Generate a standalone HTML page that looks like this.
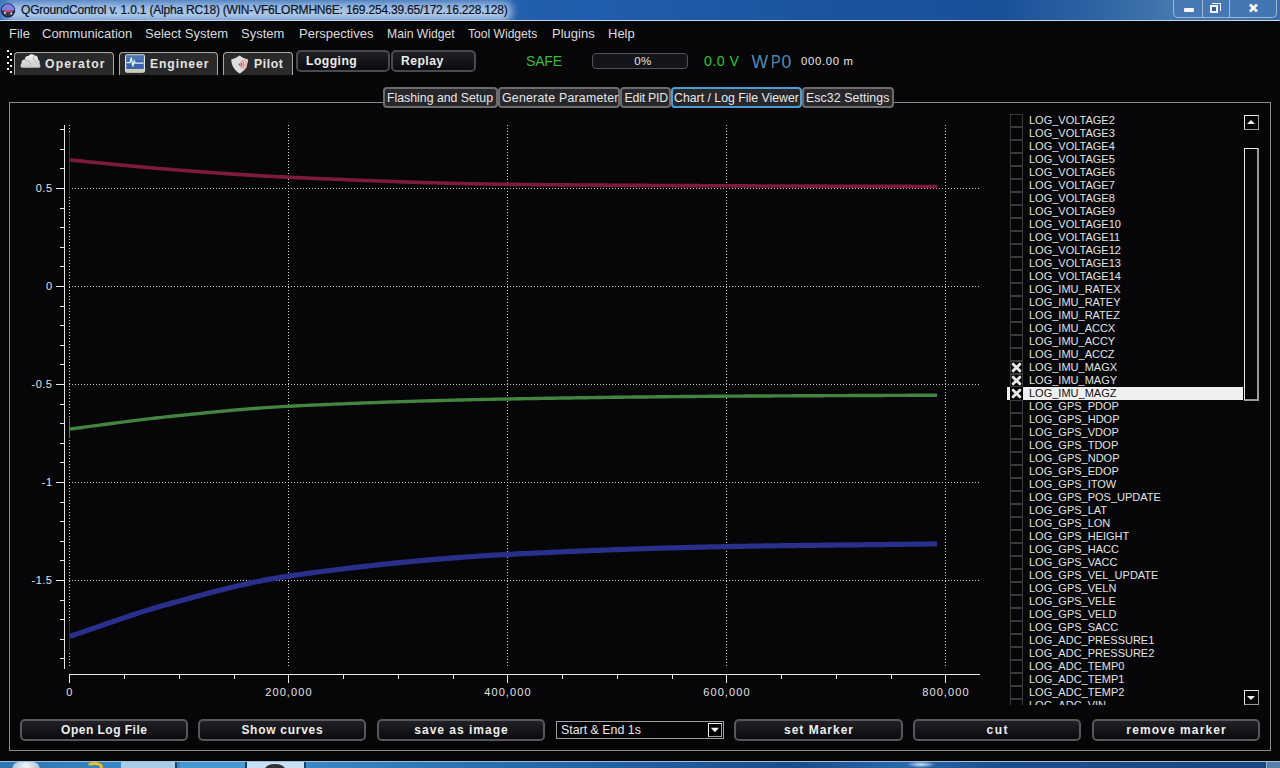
<!DOCTYPE html>
<html><head><meta charset="utf-8">
<style>
*{margin:0;padding:0;box-sizing:border-box}
html,body{width:1280px;height:768px;overflow:hidden;background:#060609;font-family:"Liberation Sans",sans-serif;color:#e6e6e6}
.a{position:absolute;white-space:pre}
#title{position:absolute;left:0;top:0;width:1280px;height:21px;overflow:hidden;
 background:linear-gradient(90deg,#3a72b8 0px,#2563ae 300px,#1f5eac 600px,#1b559f 800px,#1a5098 1000px,#2f64a4 1100px,#4577b0 1170px,#3c6eaa 1280px)}
#title .glow{position:absolute;left:4px;top:1px;width:508px;height:20px;background:linear-gradient(180deg,#8aaedc 0,#a4c0e4 40%,#b6ceea 80%,#c8dcf0 100%);filter:blur(4px);border-radius:8px}
#title .bl{position:absolute;left:0;top:20px;width:1280px;height:1px;background:#c4d6ec}
#menu span{position:absolute;white-space:pre;top:26px;font-size:13px;line-height:16px;color:#dcdcdc}
.tab{position:absolute;top:52px;height:23px;border:1px solid #a8a8a8;border-bottom:none;border-radius:4px 4px 0 0;background:#292929}
.tab span{position:absolute;white-space:pre;top:3px;font-weight:bold;font-size:12.2px;line-height:16px;color:#e4e4e4}
.tbtn{position:absolute;top:50px;height:22px;border:2px solid #4a4a4e;border-radius:5px;background:linear-gradient(180deg,#1e1e24,#0b0b0f)}
.tbtn span{position:absolute;white-space:pre;top:1px;font-weight:bold;font-size:12.2px;line-height:16px;color:#ececec}
.ptab{position:absolute;top:87px;height:21px;border:2px solid #6c6c6e;border-radius:4px;background:#27272b}
.ptab span{position:absolute;white-space:pre;top:1px;font-size:12.3px;line-height:16px;color:#e8e8e8}
.bbtn{position:absolute;top:719px;height:22px;border:2px solid #58585c;border-radius:5px;background:linear-gradient(180deg,#202026,#0a0a0e)}
.bbtn span{position:absolute;white-space:pre;left:0;right:0;top:1px;text-align:center;font-weight:bold;font-size:12px;line-height:16px;color:#ededed}
#list div{position:absolute;left:1007px;height:13px;width:236px}
#list i{position:absolute;left:3px;top:0;width:13px;height:13px;border:1px solid #3a3a3a}
#list b{position:absolute;left:22px;top:-1px;font-weight:normal;font-size:11px;line-height:14px;color:#e2e2e2;white-space:pre}
</style></head><body>
<div id="title"><div class="glow"></div><div class="bl"></div>
 <svg class="a" style="left:0;top:2px" width="18" height="17" viewBox="0 0 18 17">
  <circle cx="8" cy="8.5" r="6.6" fill="#3a3a48" stroke="#1c1c50" stroke-width="1.2"/>
  <path d="M1.6 8.5 A6.4 6.4 0 0 1 14.4 8.5 Z" fill="#7a82ea"/>
  <path d="M3.5 10 L6 7.8 L10 7.8 L12.5 10 Z" fill="#d04a6a"/>
  <circle cx="5" cy="11" r="1" fill="#e8e8e8"/><circle cx="11.3" cy="11.5" r="1" fill="#e8e8e8"/>
 </svg>
 <div class="a" style="left:21px;top:3px;font-size:12px;line-height:14px;color:#0a1424;letter-spacing:-0.2px;-webkit-text-stroke:0.2px #0a1424">QGroundControl v. 1.0.1 (Alpha RC18) (WIN-VF6LORMHN6E: 169.254.39.65/172.16.228.128)</div>
 <div class="a" style="left:1173px;top:0;width:104px;height:18px;border:1px solid #9ab8dc;border-top:none;border-radius:0 0 5px 5px;background:rgba(80,130,190,0.35)"></div>
 <div class="a" style="left:1202px;top:0;width:1px;height:18px;background:#9ab8dc"></div>
 <div class="a" style="left:1229px;top:0;width:1px;height:18px;background:#9ab8dc"></div>
 <div class="a" style="left:1184px;top:8px;width:10px;height:4px;background:#f4f4f4;border-radius:1px"></div>
 <div class="a" style="left:1212px;top:3px;width:9px;height:8px;border:1.5px solid #f0f0f0;border-left:none;border-bottom:none"></div>
 <div class="a" style="left:1210px;top:5px;width:8px;height:8px;border:2.5px solid #f4f4f4;background:#3c5c8a"></div>
 <svg class="a" style="left:1248px;top:3px" width="11" height="10" viewBox="0 0 11 10"><path d="M2 1.5 L9 8.5 M9 1.5 L2 8.5" stroke="#f6f6f6" stroke-width="2.8" stroke-linecap="butt"/></svg>
</div>

<div id="menu">
 <span style="left:9px">File</span>
 <span style="left:42px">Communication</span>
 <span style="left:145px">Select System</span>
 <span style="left:241px">System</span>
 <span style="left:299px">Perspectives</span>
 <span style="left:387px;font-size:12.2px">Main Widget</span>
 <span style="left:468px;font-size:12.1px">Tool Widgets</span>
 <span style="left:552px">Plugins</span>
 <span style="left:608px">Help</span>
</div>

<!-- grip -->
<svg class="a" style="left:0;top:0" width="14" height="76" viewBox="0 0 14 76"><g fill="#f2f2f2"><rect x="7" y="50" width="2" height="2"/><rect x="10" y="53" width="2" height="2"/><rect x="7" y="56" width="2" height="2"/><rect x="10" y="59" width="2" height="2"/><rect x="7" y="62" width="2" height="2"/><rect x="10" y="65" width="2" height="2"/><rect x="7" y="68" width="2" height="2"/><rect x="10" y="71" width="2" height="2"/></g></svg>

<div class="tab" style="left:14px;width:100px"><span style="left:30px;letter-spacing:1.15px">Operator</span>
 <svg style="position:absolute;left:5px;top:0px" width="22" height="16" viewBox="0 0 22 16">
  <defs><linearGradient id="cg" x1="0" y1="0" x2="0" y2="1"><stop offset="0" stop-color="#f2f2f2"/><stop offset="1" stop-color="#c8c8c8"/></linearGradient></defs>
  <path d="M2 14.8 C0.3 14.6 0.2 11.5 1.5 10.5 C1 8 3 6.3 5 6.5 C4.8 4 6.5 2.5 8.5 3 C9.5 0.8 13 0.5 14.5 2.5 C16.5 2 18.5 4 18 6.5 C19.8 7.5 20 9.5 19.5 11 C20.8 12 20.8 14.6 19.2 14.8 Z" fill="url(#cg)"/>
  <path d="M5 6.5 C6 7.8 7.5 8.2 9 7.8 M14.5 2.5 C13.5 4 13.2 5.5 13.8 7 M9 7.8 C10 9 10.2 10.5 9.8 12.5 M13.8 7 C15.5 7.3 16.5 8.5 17 10" stroke="#a8a8a8" stroke-width="0.7" fill="none"/>
 </svg></div>
<div class="tab" style="left:119px;width:99px"><span style="left:30px;letter-spacing:0.9px">Engineer</span>
 <svg style="position:absolute;left:4px;top:0px" width="22" height="21" viewBox="0 0 22 21">
  <rect x="1" y="1.2" width="20" height="18.6" rx="2" fill="#dfe4e6"/>
  <rect x="2.2" y="2.4" width="17.6" height="13.6" fill="#3d62ac"/>
  <rect x="2.2" y="2.4" width="17.6" height="5" fill="#5878b4" opacity="0.7"/>
  <rect x="2.2" y="16.4" width="17.6" height="2.4" fill="#c4ccb0"/>
  <path d="M2.6 9.6 L6 9.6 L7.3 4.5 L8.8 13.5 L10.2 8 L11.2 10.2 L19.4 10.2" stroke="#dcf6fa" stroke-width="1.3" fill="none"/>
 </svg></div>
<div class="tab" style="left:223px;width:70px"><span style="left:30px;letter-spacing:0.6px">Pilot</span>
 <svg style="position:absolute;left:6px;top:1px" width="20" height="20" viewBox="0 0 20 20">
  <path d="M9.6 1.6 C12 3.5 15 5 18 5.5 C18 11 15.5 16 9.8 19.6 C4 16 1.5 11 1.2 5.5 C4 5 7 3.5 9.6 1.6 Z" fill="#dedede"/>
  <path d="M11.5 6.5 A4.5 4.5 0 0 1 11.5 14.5" stroke="#e87878" stroke-width="1.4" fill="none"/>
  <path d="M13.5 5 A6.5 6.5 0 0 1 13.5 16" stroke="#f0a0a0" stroke-width="1.2" fill="none"/>
  <path d="M10.5 8.5 A2.2 2.2 0 0 1 10.5 12.5" stroke="#d84848" stroke-width="1.3" fill="none"/>
  <circle cx="9.6" cy="10.4" r="1" fill="#8a5858"/>
 </svg></div>

<div class="tbtn" style="left:296px;width:94px"><span style="left:8px;letter-spacing:0.45px">Logging</span></div>
<div class="tbtn" style="left:391px;width:85px"><span style="left:8px;letter-spacing:0.45px">Replay</span></div>

<div class="a" style="left:526px;top:53px;font-size:14px;line-height:16px;color:#3cba3c;letter-spacing:-0.2px">SAFE</div>
<div class="a" style="left:592px;top:53px;width:96px;height:16px;border:1px solid #505056;border-radius:4px;background:#14151b"></div>
<div class="a" style="left:595px;top:53px;width:96px;line-height:16px;text-align:center;font-size:11.5px;color:#e6e6e6;letter-spacing:0.4px">0%</div>
<div class="a" style="left:704px;top:53px;font-size:14px;line-height:16px;color:#22cc22;letter-spacing:0.55px">0.0 V</div>
<div class="a" style="left:751.5px;top:53px;font-size:17.6px;line-height:18px;color:#4f8cb4">W</div>
<div class="a" style="left:770.5px;top:53px;font-size:17.6px;line-height:18px;color:#4f8cb4;transform:scaleX(0.82);transform-origin:0 0">P</div>
<div class="a" style="left:781.5px;top:53px;font-size:17.6px;line-height:18px;color:#4f8cb4">0</div>
<div class="a" style="left:801px;top:54px;font-size:11.3px;line-height:14px;color:#e6e6e6;letter-spacing:0.7px">000.00 m</div>

<!-- pane -->
<div class="a" style="left:9px;top:102px;width:1262px;height:649px;border:1px solid #8a8a8a"></div>

<div class="ptab" style="left:383px;width:115px"><span style="left:2px">Flashing and Setup</span></div>
<div class="ptab" style="left:498px;width:122px"><span style="left:2px;letter-spacing:0.25px">Generate Parameter</span></div>
<div class="ptab" style="left:620px;width:51px"><span style="left:2.5px;letter-spacing:-0.2px">Edit PID</span></div>
<div class="ptab" style="left:671px;width:131px;border-color:#4a9ed4"><span style="left:1px">Chart / Log File Viewer</span></div>
<div class="ptab" style="left:802px;width:92px"><span style="left:2px;letter-spacing:0.1px">Esc32 Settings</span></div>

<!-- chart -->
<svg class="a" style="left:0;top:0" width="1000" height="710" viewBox="0 0 1000 710" shape-rendering="crispEdges">
<line x1="69.5" y1="125" x2="69.5" y2="668" stroke="#cfcfcf" stroke-width="1" stroke-dasharray="1 2"/>
<line x1="288.5" y1="125" x2="288.5" y2="668" stroke="#cfcfcf" stroke-width="1" stroke-dasharray="1 2"/>
<line x1="507.5" y1="125" x2="507.5" y2="668" stroke="#cfcfcf" stroke-width="1" stroke-dasharray="1 2"/>
<line x1="726.5" y1="125" x2="726.5" y2="668" stroke="#cfcfcf" stroke-width="1" stroke-dasharray="1 2"/>
<line x1="945.5" y1="125" x2="945.5" y2="668" stroke="#cfcfcf" stroke-width="1" stroke-dasharray="1 2"/>
<line x1="69" y1="188.5" x2="980" y2="188.5" stroke="#cfcfcf" stroke-width="1" stroke-dasharray="1 2"/>
<line x1="69" y1="286.5" x2="980" y2="286.5" stroke="#cfcfcf" stroke-width="1" stroke-dasharray="1 2"/>
<line x1="69" y1="384.5" x2="980" y2="384.5" stroke="#cfcfcf" stroke-width="1" stroke-dasharray="1 2"/>
<line x1="69" y1="482.5" x2="980" y2="482.5" stroke="#cfcfcf" stroke-width="1" stroke-dasharray="1 2"/>
<line x1="69" y1="580.5" x2="980" y2="580.5" stroke="#cfcfcf" stroke-width="1" stroke-dasharray="1 2"/>
<line x1="64.5" y1="125" x2="64.5" y2="669" stroke="#e8e8e8" stroke-width="1"/>
<line x1="60" y1="658.5" x2="64" y2="658.5" stroke="#e8e8e8" stroke-width="1"/>
<line x1="60" y1="639.5" x2="64" y2="639.5" stroke="#e8e8e8" stroke-width="1"/>
<line x1="60" y1="619.5" x2="64" y2="619.5" stroke="#e8e8e8" stroke-width="1"/>
<line x1="60" y1="600.5" x2="64" y2="600.5" stroke="#e8e8e8" stroke-width="1"/>
<line x1="56" y1="580.5" x2="64" y2="580.5" stroke="#e8e8e8" stroke-width="1"/>
<line x1="60" y1="560.5" x2="64" y2="560.5" stroke="#e8e8e8" stroke-width="1"/>
<line x1="60" y1="541.5" x2="64" y2="541.5" stroke="#e8e8e8" stroke-width="1"/>
<line x1="60" y1="521.5" x2="64" y2="521.5" stroke="#e8e8e8" stroke-width="1"/>
<line x1="60" y1="502.5" x2="64" y2="502.5" stroke="#e8e8e8" stroke-width="1"/>
<line x1="56" y1="482.5" x2="64" y2="482.5" stroke="#e8e8e8" stroke-width="1"/>
<line x1="60" y1="462.5" x2="64" y2="462.5" stroke="#e8e8e8" stroke-width="1"/>
<line x1="60" y1="443.5" x2="64" y2="443.5" stroke="#e8e8e8" stroke-width="1"/>
<line x1="60" y1="423.5" x2="64" y2="423.5" stroke="#e8e8e8" stroke-width="1"/>
<line x1="60" y1="404.5" x2="64" y2="404.5" stroke="#e8e8e8" stroke-width="1"/>
<line x1="56" y1="384.5" x2="64" y2="384.5" stroke="#e8e8e8" stroke-width="1"/>
<line x1="60" y1="364.5" x2="64" y2="364.5" stroke="#e8e8e8" stroke-width="1"/>
<line x1="60" y1="345.5" x2="64" y2="345.5" stroke="#e8e8e8" stroke-width="1"/>
<line x1="60" y1="325.5" x2="64" y2="325.5" stroke="#e8e8e8" stroke-width="1"/>
<line x1="60" y1="306.5" x2="64" y2="306.5" stroke="#e8e8e8" stroke-width="1"/>
<line x1="56" y1="286.5" x2="64" y2="286.5" stroke="#e8e8e8" stroke-width="1"/>
<line x1="60" y1="266.5" x2="64" y2="266.5" stroke="#e8e8e8" stroke-width="1"/>
<line x1="60" y1="247.5" x2="64" y2="247.5" stroke="#e8e8e8" stroke-width="1"/>
<line x1="60" y1="227.5" x2="64" y2="227.5" stroke="#e8e8e8" stroke-width="1"/>
<line x1="60" y1="208.5" x2="64" y2="208.5" stroke="#e8e8e8" stroke-width="1"/>
<line x1="56" y1="188.5" x2="64" y2="188.5" stroke="#e8e8e8" stroke-width="1"/>
<line x1="60" y1="168.5" x2="64" y2="168.5" stroke="#e8e8e8" stroke-width="1"/>
<line x1="60" y1="149.5" x2="64" y2="149.5" stroke="#e8e8e8" stroke-width="1"/>
<line x1="60" y1="129.5" x2="64" y2="129.5" stroke="#e8e8e8" stroke-width="1"/>
<line x1="69" y1="674.5" x2="980" y2="674.5" stroke="#e8e8e8" stroke-width="1"/>
<line x1="69.5" y1="674" x2="69.5" y2="683" stroke="#e8e8e8" stroke-width="1"/>
<line x1="124.5" y1="674" x2="124.5" y2="679" stroke="#e8e8e8" stroke-width="1"/>
<line x1="179.5" y1="674" x2="179.5" y2="679" stroke="#e8e8e8" stroke-width="1"/>
<line x1="234.5" y1="674" x2="234.5" y2="679" stroke="#e8e8e8" stroke-width="1"/>
<line x1="288.5" y1="674" x2="288.5" y2="683" stroke="#e8e8e8" stroke-width="1"/>
<line x1="343.5" y1="674" x2="343.5" y2="679" stroke="#e8e8e8" stroke-width="1"/>
<line x1="398.5" y1="674" x2="398.5" y2="679" stroke="#e8e8e8" stroke-width="1"/>
<line x1="453.5" y1="674" x2="453.5" y2="679" stroke="#e8e8e8" stroke-width="1"/>
<line x1="507.5" y1="674" x2="507.5" y2="683" stroke="#e8e8e8" stroke-width="1"/>
<line x1="562.5" y1="674" x2="562.5" y2="679" stroke="#e8e8e8" stroke-width="1"/>
<line x1="617.5" y1="674" x2="617.5" y2="679" stroke="#e8e8e8" stroke-width="1"/>
<line x1="672.5" y1="674" x2="672.5" y2="679" stroke="#e8e8e8" stroke-width="1"/>
<line x1="726.5" y1="674" x2="726.5" y2="683" stroke="#e8e8e8" stroke-width="1"/>
<line x1="781.5" y1="674" x2="781.5" y2="679" stroke="#e8e8e8" stroke-width="1"/>
<line x1="836.5" y1="674" x2="836.5" y2="679" stroke="#e8e8e8" stroke-width="1"/>
<line x1="891.5" y1="674" x2="891.5" y2="679" stroke="#e8e8e8" stroke-width="1"/>
<line x1="945.5" y1="674" x2="945.5" y2="683" stroke="#e8e8e8" stroke-width="1"/>
</svg>
<svg class="a" style="left:0;top:0" width="1000" height="710" viewBox="0 0 1000 710">
<path d="M69.5 132 L69.5 195.6" stroke="#6a1834" stroke-width="1" fill="none"/>
<path d="M70.0 160.00 L74.0 160.38 L78.0 160.77 L82.0 161.16 L86.0 161.55 L90.0 161.95 L94.0 162.35 L98.0 162.75 L102.0 163.15 L106.0 163.55 L110.0 163.94 L114.0 164.34 L118.0 164.74 L122.0 165.13 L126.0 165.52 L130.0 165.91 L134.0 166.29 L138.0 166.66 L142.0 167.03 L146.0 167.39 L150.0 167.75 L154.0 168.09 L158.0 168.43 L162.0 168.76 L166.0 169.08 L170.0 169.39 L174.0 169.71 L178.0 170.02 L182.0 170.33 L186.0 170.64 L190.0 170.95 L194.0 171.25 L198.0 171.56 L202.0 171.85 L206.0 172.15 L210.0 172.45 L214.0 172.74 L218.0 173.02 L222.0 173.31 L226.0 173.58 L230.0 173.86 L234.0 174.13 L238.0 174.39 L242.0 174.65 L246.0 174.91 L250.0 175.16 L254.0 175.40 L258.0 175.64 L262.0 175.87 L266.0 176.09 L270.0 176.31 L274.0 176.52 L278.0 176.72 L282.0 176.92 L286.0 177.11 L290.0 177.29 L294.0 177.47 L298.0 177.65 L302.0 177.83 L306.0 178.00 L310.0 178.18 L314.0 178.36 L318.0 178.53 L322.0 178.70 L326.0 178.88 L330.0 179.05 L334.0 179.22 L338.0 179.38 L342.0 179.55 L346.0 179.72 L350.0 179.88 L354.0 180.04 L358.0 180.20 L362.0 180.36 L366.0 180.52 L370.0 180.67 L374.0 180.82 L378.0 180.97 L382.0 181.12 L386.0 181.27 L390.0 181.41 L394.0 181.55 L398.0 181.69 L402.0 181.83 L406.0 181.96 L410.0 182.09 L414.0 182.22 L418.0 182.35 L422.0 182.47 L426.0 182.59 L430.0 182.71 L434.0 182.82 L438.0 182.93 L442.0 183.04 L446.0 183.15 L450.0 183.25 L454.0 183.35 L458.0 183.44 L462.0 183.53 L466.0 183.62 L470.0 183.71 L474.0 183.79 L478.0 183.86 L482.0 183.94 L486.0 184.00 L490.0 184.07 L494.0 184.13 L498.0 184.19 L502.0 184.24 L506.0 184.29 L510.0 184.33 L514.0 184.38 L518.0 184.42 L522.0 184.46 L526.0 184.50 L530.0 184.54 L534.0 184.58 L538.0 184.62 L542.0 184.66 L546.0 184.70 L550.0 184.73 L554.0 184.77 L558.0 184.80 L562.0 184.84 L566.0 184.87 L570.0 184.90 L574.0 184.94 L578.0 184.97 L582.0 185.00 L586.0 185.03 L590.0 185.06 L594.0 185.09 L598.0 185.11 L602.0 185.14 L606.0 185.17 L610.0 185.20 L614.0 185.22 L618.0 185.25 L622.0 185.27 L626.0 185.30 L630.0 185.32 L634.0 185.34 L638.0 185.37 L642.0 185.39 L646.0 185.41 L650.0 185.43 L654.0 185.46 L658.0 185.48 L662.0 185.50 L666.0 185.52 L670.0 185.54 L674.0 185.56 L678.0 185.58 L682.0 185.60 L686.0 185.62 L690.0 185.64 L694.0 185.65 L698.0 185.67 L702.0 185.69 L706.0 185.71 L710.0 185.73 L714.0 185.75 L718.0 185.76 L722.0 185.78 L726.0 185.80 L730.0 185.82 L734.0 185.84 L738.0 185.85 L742.0 185.87 L746.0 185.89 L750.0 185.90 L754.0 185.92 L758.0 185.93 L762.0 185.95 L766.0 185.96 L770.0 185.98 L774.0 185.99 L778.0 186.01 L782.0 186.02 L786.0 186.03 L790.0 186.05 L794.0 186.06 L798.0 186.07 L802.0 186.09 L806.0 186.10 L810.0 186.11 L814.0 186.13 L818.0 186.14 L822.0 186.15 L826.0 186.16 L830.0 186.18 L834.0 186.19 L838.0 186.20 L842.0 186.21 L846.0 186.22 L850.0 186.24 L854.0 186.25 L858.0 186.26 L862.0 186.27 L866.0 186.28 L870.0 186.29 L874.0 186.31 L878.0 186.32 L882.0 186.33 L886.0 186.34 L890.0 186.35 L894.0 186.37 L898.0 186.38 L902.0 186.39 L906.0 186.40 L910.0 186.41 L914.0 186.43 L918.0 186.44 L922.0 186.45 L926.0 186.46 L930.0 186.48 L934.0 186.49 L937.0 186.50" stroke="#7e1a3c" stroke-width="3.6" fill="none" stroke-linejoin="round"/>
<path d="M69.5 418 L69.5 438" stroke="#43843f" stroke-width="1" fill="none"/>
<path d="M70.0 429.00 L74.0 428.49 L78.0 427.98 L82.0 427.45 L86.0 426.93 L90.0 426.40 L94.0 425.87 L98.0 425.33 L102.0 424.80 L106.0 424.26 L110.0 423.73 L114.0 423.20 L118.0 422.67 L122.0 422.14 L126.0 421.62 L130.0 421.11 L134.0 420.60 L138.0 420.10 L142.0 419.61 L146.0 419.13 L150.0 418.66 L154.0 418.20 L158.0 417.75 L162.0 417.32 L166.0 416.90 L170.0 416.48 L174.0 416.06 L178.0 415.65 L182.0 415.23 L186.0 414.82 L190.0 414.41 L194.0 414.00 L198.0 413.59 L202.0 413.19 L206.0 412.79 L210.0 412.40 L214.0 412.01 L218.0 411.62 L222.0 411.24 L226.0 410.87 L230.0 410.51 L234.0 410.15 L238.0 409.80 L242.0 409.46 L246.0 409.13 L250.0 408.80 L254.0 408.49 L258.0 408.19 L262.0 407.90 L266.0 407.62 L270.0 407.35 L274.0 407.09 L278.0 406.85 L282.0 406.62 L286.0 406.40 L290.0 406.20 L294.0 406.00 L298.0 405.81 L302.0 405.61 L306.0 405.42 L310.0 405.24 L314.0 405.05 L318.0 404.87 L322.0 404.69 L326.0 404.51 L330.0 404.34 L334.0 404.17 L338.0 404.00 L342.0 403.83 L346.0 403.67 L350.0 403.51 L354.0 403.35 L358.0 403.19 L362.0 403.04 L366.0 402.89 L370.0 402.74 L374.0 402.59 L378.0 402.45 L382.0 402.31 L386.0 402.17 L390.0 402.03 L394.0 401.89 L398.0 401.76 L402.0 401.63 L406.0 401.51 L410.0 401.38 L414.0 401.26 L418.0 401.14 L422.0 401.02 L426.0 400.90 L430.0 400.79 L434.0 400.68 L438.0 400.57 L442.0 400.46 L446.0 400.35 L450.0 400.25 L454.0 400.15 L458.0 400.05 L462.0 399.95 L466.0 399.86 L470.0 399.77 L474.0 399.67 L478.0 399.59 L482.0 399.50 L486.0 399.41 L490.0 399.33 L494.0 399.25 L498.0 399.17 L502.0 399.09 L506.0 399.02 L510.0 398.94 L514.0 398.87 L518.0 398.80 L522.0 398.73 L526.0 398.66 L530.0 398.59 L534.0 398.52 L538.0 398.45 L542.0 398.38 L546.0 398.32 L550.0 398.25 L554.0 398.19 L558.0 398.12 L562.0 398.06 L566.0 398.00 L570.0 397.94 L574.0 397.88 L578.0 397.82 L582.0 397.76 L586.0 397.70 L590.0 397.64 L594.0 397.58 L598.0 397.53 L602.0 397.47 L606.0 397.42 L610.0 397.37 L614.0 397.32 L618.0 397.26 L622.0 397.21 L626.0 397.16 L630.0 397.11 L634.0 397.07 L638.0 397.02 L642.0 396.97 L646.0 396.93 L650.0 396.88 L654.0 396.84 L658.0 396.80 L662.0 396.75 L666.0 396.71 L670.0 396.67 L674.0 396.63 L678.0 396.59 L682.0 396.56 L686.0 396.52 L690.0 396.48 L694.0 396.45 L698.0 396.41 L702.0 396.38 L706.0 396.35 L710.0 396.32 L714.0 396.29 L718.0 396.26 L722.0 396.23 L726.0 396.20 L730.0 396.17 L734.0 396.15 L738.0 396.12 L742.0 396.09 L746.0 396.07 L750.0 396.05 L754.0 396.02 L758.0 396.00 L762.0 395.98 L766.0 395.95 L770.0 395.93 L774.0 395.91 L778.0 395.89 L782.0 395.87 L786.0 395.85 L790.0 395.83 L794.0 395.81 L798.0 395.79 L802.0 395.77 L806.0 395.75 L810.0 395.74 L814.0 395.72 L818.0 395.70 L822.0 395.68 L826.0 395.67 L830.0 395.65 L834.0 395.63 L838.0 395.62 L842.0 395.60 L846.0 395.58 L850.0 395.57 L854.0 395.55 L858.0 395.53 L862.0 395.52 L866.0 395.50 L870.0 395.49 L874.0 395.47 L878.0 395.45 L882.0 395.44 L886.0 395.42 L890.0 395.41 L894.0 395.39 L898.0 395.37 L902.0 395.36 L906.0 395.34 L910.0 395.32 L914.0 395.30 L918.0 395.29 L922.0 395.27 L926.0 395.25 L930.0 395.23 L934.0 395.21 L937.0 395.20" stroke="#43843f" stroke-width="3.4" fill="none" stroke-linejoin="round"/>
<path d="M69.5 622 L69.5 651" stroke="#262a70" stroke-width="1" fill="none"/>
<path d="M70.0 636.30 L74.0 634.97 L78.0 633.63 L82.0 632.28 L86.0 630.91 L90.0 629.53 L94.0 628.15 L98.0 626.76 L102.0 625.37 L106.0 623.98 L110.0 622.60 L114.0 621.22 L118.0 619.84 L122.0 618.48 L126.0 617.12 L130.0 615.78 L134.0 614.46 L138.0 613.15 L142.0 611.87 L146.0 610.61 L150.0 609.37 L154.0 608.16 L158.0 606.98 L162.0 605.84 L166.0 604.72 L170.0 603.62 L174.0 602.52 L178.0 601.41 L182.0 600.31 L186.0 599.22 L190.0 598.12 L194.0 597.04 L198.0 595.96 L202.0 594.89 L206.0 593.83 L210.0 592.78 L214.0 591.74 L218.0 590.71 L222.0 589.70 L226.0 588.71 L230.0 587.73 L234.0 586.77 L238.0 585.83 L242.0 584.91 L246.0 584.01 L250.0 583.14 L254.0 582.29 L258.0 581.46 L262.0 580.66 L266.0 579.89 L270.0 579.15 L274.0 578.44 L278.0 577.76 L282.0 577.11 L286.0 576.49 L290.0 575.91 L294.0 575.34 L298.0 574.77 L302.0 574.21 L306.0 573.66 L310.0 573.12 L314.0 572.58 L318.0 572.04 L322.0 571.52 L326.0 571.00 L330.0 570.49 L334.0 569.98 L338.0 569.48 L342.0 568.99 L346.0 568.50 L350.0 568.02 L354.0 567.55 L358.0 567.08 L362.0 566.62 L366.0 566.17 L370.0 565.72 L374.0 565.28 L378.0 564.85 L382.0 564.42 L386.0 564.00 L390.0 563.59 L394.0 563.19 L398.0 562.79 L402.0 562.39 L406.0 562.01 L410.0 561.63 L414.0 561.26 L418.0 560.89 L422.0 560.53 L426.0 560.18 L430.0 559.83 L434.0 559.49 L438.0 559.16 L442.0 558.84 L446.0 558.52 L450.0 558.21 L454.0 557.90 L458.0 557.60 L462.0 557.31 L466.0 557.03 L470.0 556.75 L474.0 556.48 L478.0 556.21 L482.0 555.96 L486.0 555.70 L490.0 555.46 L494.0 555.22 L498.0 554.99 L502.0 554.77 L506.0 554.55 L510.0 554.34 L514.0 554.13 L518.0 553.93 L522.0 553.72 L526.0 553.52 L530.0 553.32 L534.0 553.13 L538.0 552.93 L542.0 552.74 L546.0 552.55 L550.0 552.36 L554.0 552.18 L558.0 552.00 L562.0 551.82 L566.0 551.64 L570.0 551.47 L574.0 551.30 L578.0 551.13 L582.0 550.96 L586.0 550.79 L590.0 550.63 L594.0 550.47 L598.0 550.31 L602.0 550.16 L606.0 550.01 L610.0 549.86 L614.0 549.71 L618.0 549.56 L622.0 549.42 L626.0 549.28 L630.0 549.14 L634.0 549.01 L638.0 548.88 L642.0 548.75 L646.0 548.62 L650.0 548.49 L654.0 548.37 L658.0 548.25 L662.0 548.13 L666.0 548.02 L670.0 547.91 L674.0 547.80 L678.0 547.69 L682.0 547.58 L686.0 547.48 L690.0 547.38 L694.0 547.29 L698.0 547.19 L702.0 547.10 L706.0 547.01 L710.0 546.92 L714.0 546.84 L718.0 546.76 L722.0 546.68 L726.0 546.60 L730.0 546.53 L734.0 546.45 L738.0 546.38 L742.0 546.31 L746.0 546.25 L750.0 546.18 L754.0 546.11 L758.0 546.05 L762.0 545.99 L766.0 545.93 L770.0 545.87 L774.0 545.81 L778.0 545.76 L782.0 545.70 L786.0 545.65 L790.0 545.59 L794.0 545.54 L798.0 545.49 L802.0 545.44 L806.0 545.39 L810.0 545.34 L814.0 545.29 L818.0 545.25 L822.0 545.20 L826.0 545.15 L830.0 545.11 L834.0 545.06 L838.0 545.02 L842.0 544.97 L846.0 544.93 L850.0 544.89 L854.0 544.84 L858.0 544.80 L862.0 544.76 L866.0 544.71 L870.0 544.67 L874.0 544.63 L878.0 544.58 L882.0 544.54 L886.0 544.50 L890.0 544.45 L894.0 544.41 L898.0 544.36 L902.0 544.32 L906.0 544.27 L910.0 544.23 L914.0 544.18 L918.0 544.13 L922.0 544.09 L926.0 544.04 L930.0 543.99 L934.0 543.94 L937.0 543.90" stroke="#2b2f8c" stroke-width="5.2" fill="none" stroke-linejoin="round"/>
</svg>
<div class="a" style="left:0;width:52.5px;text-align:right;top:181px;font-size:11px;line-height:14px;color:#e2e2e2;letter-spacing:0.5px">0.5</div>
<div class="a" style="left:0;width:52.5px;text-align:right;top:279px;font-size:11px;line-height:14px;color:#e2e2e2;letter-spacing:0.5px">0</div>
<div class="a" style="left:0;width:52.5px;text-align:right;top:377px;font-size:11px;line-height:14px;color:#e2e2e2;letter-spacing:0.5px">-0.5</div>
<div class="a" style="left:0;width:52.5px;text-align:right;top:475px;font-size:11px;line-height:14px;color:#e2e2e2;letter-spacing:0.5px">-1</div>
<div class="a" style="left:0;width:52.5px;text-align:right;top:573px;font-size:11px;line-height:14px;color:#e2e2e2;letter-spacing:0.5px">-1.5</div>
<div class="a" style="left:29.4px;width:80px;text-align:center;top:685px;font-size:11px;line-height:14px;color:#e2e2e2;letter-spacing:1.1px;padding-left:1.1px">0</div>
<div class="a" style="left:248.4px;width:80px;text-align:center;top:685px;font-size:11px;line-height:14px;color:#e2e2e2;letter-spacing:1.1px;padding-left:1.1px">200,000</div>
<div class="a" style="left:467.4px;width:80px;text-align:center;top:685px;font-size:11px;line-height:14px;color:#e2e2e2;letter-spacing:1.1px;padding-left:1.1px">400,000</div>
<div class="a" style="left:686.4px;width:80px;text-align:center;top:685px;font-size:11px;line-height:14px;color:#e2e2e2;letter-spacing:1.1px;padding-left:1.1px">600,000</div>
<div class="a" style="left:905.4px;width:80px;text-align:center;top:685px;font-size:11px;line-height:14px;color:#e2e2e2;letter-spacing:1.1px;padding-left:1.1px">800,000</div>

<div class="a" style="left:1000px;top:114px;width:244px;height:591px;overflow:hidden" id="list">
<div style="top:0px;left:7px"><i style=""></i><b style="">LOG_VOLTAGE2</b></div>
<div style="top:13px;left:7px"><i style=""></i><b style="">LOG_VOLTAGE3</b></div>
<div style="top:26px;left:7px"><i style=""></i><b style="">LOG_VOLTAGE4</b></div>
<div style="top:39px;left:7px"><i style=""></i><b style="">LOG_VOLTAGE5</b></div>
<div style="top:52px;left:7px"><i style=""></i><b style="">LOG_VOLTAGE6</b></div>
<div style="top:65px;left:7px"><i style=""></i><b style="">LOG_VOLTAGE7</b></div>
<div style="top:78px;left:7px"><i style=""></i><b style="">LOG_VOLTAGE8</b></div>
<div style="top:91px;left:7px"><i style=""></i><b style="">LOG_VOLTAGE9</b></div>
<div style="top:104px;left:7px"><i style=""></i><b style="">LOG_VOLTAGE10</b></div>
<div style="top:117px;left:7px"><i style=""></i><b style="">LOG_VOLTAGE11</b></div>
<div style="top:130px;left:7px"><i style=""></i><b style="">LOG_VOLTAGE12</b></div>
<div style="top:143px;left:7px"><i style=""></i><b style="">LOG_VOLTAGE13</b></div>
<div style="top:156px;left:7px"><i style=""></i><b style="">LOG_VOLTAGE14</b></div>
<div style="top:169px;left:7px"><i style=""></i><b style="">LOG_IMU_RATEX</b></div>
<div style="top:182px;left:7px"><i style=""></i><b style="">LOG_IMU_RATEY</b></div>
<div style="top:195px;left:7px"><i style=""></i><b style="">LOG_IMU_RATEZ</b></div>
<div style="top:208px;left:7px"><i style=""></i><b style="">LOG_IMU_ACCX</b></div>
<div style="top:221px;left:7px"><i style=""></i><b style="">LOG_IMU_ACCY</b></div>
<div style="top:234px;left:7px"><i style=""></i><b style="">LOG_IMU_ACCZ</b></div>
<div style="top:247px;left:7px"><i style=""><svg style="position:absolute;left:0;top:0" width="11" height="11" viewBox="0 0 11 11"><path d="M2.2 2.2 L8.8 8.8 M8.8 2.2 L2.2 8.8" stroke="#e4e4e4" stroke-width="3" stroke-linecap="round"/></svg></i><b style="">LOG_IMU_MAGX</b></div>
<div style="top:260px;left:7px"><i style=""><svg style="position:absolute;left:0;top:0" width="11" height="11" viewBox="0 0 11 11"><path d="M2.2 2.2 L8.8 8.8 M8.8 2.2 L2.2 8.8" stroke="#e4e4e4" stroke-width="3" stroke-linecap="round"/></svg></i><b style="">LOG_IMU_MAGY</b></div>
<div style="top:273px;left:7px;background:#f0f0f0"><i style="background:#000;border-color:#000"><svg style="position:absolute;left:0;top:0" width="11" height="11" viewBox="0 0 11 11"><path d="M2.2 2.2 L8.8 8.8 M8.8 2.2 L2.2 8.8" stroke="#e4e4e4" stroke-width="3" stroke-linecap="round"/></svg></i><b style="color:#101010">LOG_IMU_MAGZ</b></div>
<div style="top:286px;left:7px"><i style=""></i><b style="">LOG_GPS_PDOP</b></div>
<div style="top:299px;left:7px"><i style=""></i><b style="">LOG_GPS_HDOP</b></div>
<div style="top:312px;left:7px"><i style=""></i><b style="">LOG_GPS_VDOP</b></div>
<div style="top:325px;left:7px"><i style=""></i><b style="">LOG_GPS_TDOP</b></div>
<div style="top:338px;left:7px"><i style=""></i><b style="">LOG_GPS_NDOP</b></div>
<div style="top:351px;left:7px"><i style=""></i><b style="">LOG_GPS_EDOP</b></div>
<div style="top:364px;left:7px"><i style=""></i><b style="">LOG_GPS_ITOW</b></div>
<div style="top:377px;left:7px"><i style=""></i><b style="">LOG_GPS_POS_UPDATE</b></div>
<div style="top:390px;left:7px"><i style=""></i><b style="">LOG_GPS_LAT</b></div>
<div style="top:403px;left:7px"><i style=""></i><b style="">LOG_GPS_LON</b></div>
<div style="top:416px;left:7px"><i style=""></i><b style="">LOG_GPS_HEIGHT</b></div>
<div style="top:429px;left:7px"><i style=""></i><b style="">LOG_GPS_HACC</b></div>
<div style="top:442px;left:7px"><i style=""></i><b style="">LOG_GPS_VACC</b></div>
<div style="top:455px;left:7px"><i style=""></i><b style="">LOG_GPS_VEL_UPDATE</b></div>
<div style="top:468px;left:7px"><i style=""></i><b style="">LOG_GPS_VELN</b></div>
<div style="top:481px;left:7px"><i style=""></i><b style="">LOG_GPS_VELE</b></div>
<div style="top:494px;left:7px"><i style=""></i><b style="">LOG_GPS_VELD</b></div>
<div style="top:507px;left:7px"><i style=""></i><b style="">LOG_GPS_SACC</b></div>
<div style="top:520px;left:7px"><i style=""></i><b style="">LOG_ADC_PRESSURE1</b></div>
<div style="top:533px;left:7px"><i style=""></i><b style="">LOG_ADC_PRESSURE2</b></div>
<div style="top:546px;left:7px"><i style=""></i><b style="">LOG_ADC_TEMP0</b></div>
<div style="top:559px;left:7px"><i style=""></i><b style="">LOG_ADC_TEMP1</b></div>
<div style="top:572px;left:7px"><i style=""></i><b style="">LOG_ADC_TEMP2</b></div>
<div style="top:585px;left:7px"><i style=""></i><b style="">LOG_ADC_VIN</b></div>
</div>
<div class="a" style="left:1244px;top:115px;width:15px;height:15px;border:1px solid #e8e8e8;border-right-color:#9a9a9a;border-bottom-color:#9a9a9a"></div>
<svg class="a" style="left:1246px;top:119px" width="10" height="6" viewBox="0 0 10 6"><path d="M1 5 L5 1 L9 5 Z" fill="#f0f0f0"/></svg>
<div class="a" style="left:1244px;top:148px;width:15px;height:253px;border:1px solid #e8e8e8;border-right-color:#9a9a9a;border-bottom-color:#9a9a9a;border-width:1px 2px 2px 1px"></div>
<div class="a" style="left:1244px;top:690px;width:15px;height:15px;border:1px solid #e8e8e8;border-right-color:#9a9a9a;border-bottom-color:#9a9a9a"></div>
<svg class="a" style="left:1246px;top:695px" width="10" height="6" viewBox="0 0 10 6"><path d="M1 1 L5 5 L9 1 Z" fill="#f0f0f0"/></svg>

<div class="bbtn" style="left:20px;width:168px"><span style="letter-spacing:0.48px;padding-left:0.48px">Open Log File</span></div>
<div class="bbtn" style="left:198px;width:168px"><span style="letter-spacing:0.72px;padding-left:0.72px">Show curves</span></div>
<div class="bbtn" style="left:377px;width:168px"><span style="letter-spacing:1.0px;padding-left:1.0px">save as image</span></div>
<div class="a" style="left:556px;top:721px;width:168px;height:18px;border:1px solid #a0a0a0;background:#050507"></div>
<div class="a" style="left:561px;top:722px;font-size:12.4px;line-height:16px;color:#e6e6e6">Start &amp; End 1s</div>
<div class="a" style="left:708px;top:723px;width:14px;height:14px;border:1px solid #f0f0f0;border-right-color:#a0a0a0;border-bottom-color:#a0a0a0;background:#000"></div>
<svg class="a" style="left:710px;top:727px" width="10" height="6" viewBox="0 0 10 6"><path d="M0.8 0.8 L9 0.8 L4.9 5.2 Z" fill="#f4f4f4"/></svg>
<div class="bbtn" style="left:734px;width:169px"><span style="letter-spacing:1.0px;padding-left:1.0px">set Marker</span></div>
<div class="bbtn" style="left:913px;width:168px"><span style="letter-spacing:1.5px;padding-left:1.5px">cut</span></div>
<div class="bbtn" style="left:1092px;width:168px"><span style="letter-spacing:1.1px;padding-left:1.1px">remove marker</span></div>

<div class="a" style="left:0;top:761px;width:1280px;height:7px;background:linear-gradient(90deg,#2f74b0 0,#3a86c0 120px,#3a88c4 300px,#2a6cac 500px,#1c4c88 800px,#2a68a8 900px,#1e4e8a 1000px,#1a4680 1280px);border-top:1px solid #9cc0e0"></div>
<div class="a" style="left:12px;top:762px;width:28px;height:14px;border-radius:14px;background:radial-gradient(ellipse at 50% 30%,#f4f8fc,#b8c8d8 60%,#4a7aa8)"></div>
<div class="a" style="left:86px;top:762px;width:17px;height:10px;border:3px solid #e8c020;border-radius:50%;border-bottom-color:transparent;border-left-color:transparent"></div>
<div class="a" style="left:121px;top:762px;width:54px;height:6px;background:#a8cce6"></div>
<div class="a" style="left:175px;top:762px;width:2px;height:6px;background:#18406a"></div>
<div class="a" style="left:180px;top:762px;width:65px;height:6px;background:#4a98d0"></div>
<div class="a" style="left:245px;top:762px;width:2px;height:6px;background:#18406a"></div>
<div class="a" style="left:247px;top:762px;width:57px;height:6px;background:#c8e0f2"></div>
<div class="a" style="left:265px;top:764px;width:20px;height:10px;border-radius:50%;background:#303238"></div>
<div class="a" style="left:304px;top:762px;width:2px;height:6px;background:#18406a"></div>
<div class="a" style="left:906px;top:761px;width:30px;height:7px;background:radial-gradient(ellipse at 50% 50%,rgba(220,240,255,0.9),rgba(220,240,255,0) 70%)"></div>
<div class="a" style="left:1266px;top:762px;width:14px;height:6px;background:#5a7ea8;border-left:1px solid #a0b8d0"></div>
</body></html>
